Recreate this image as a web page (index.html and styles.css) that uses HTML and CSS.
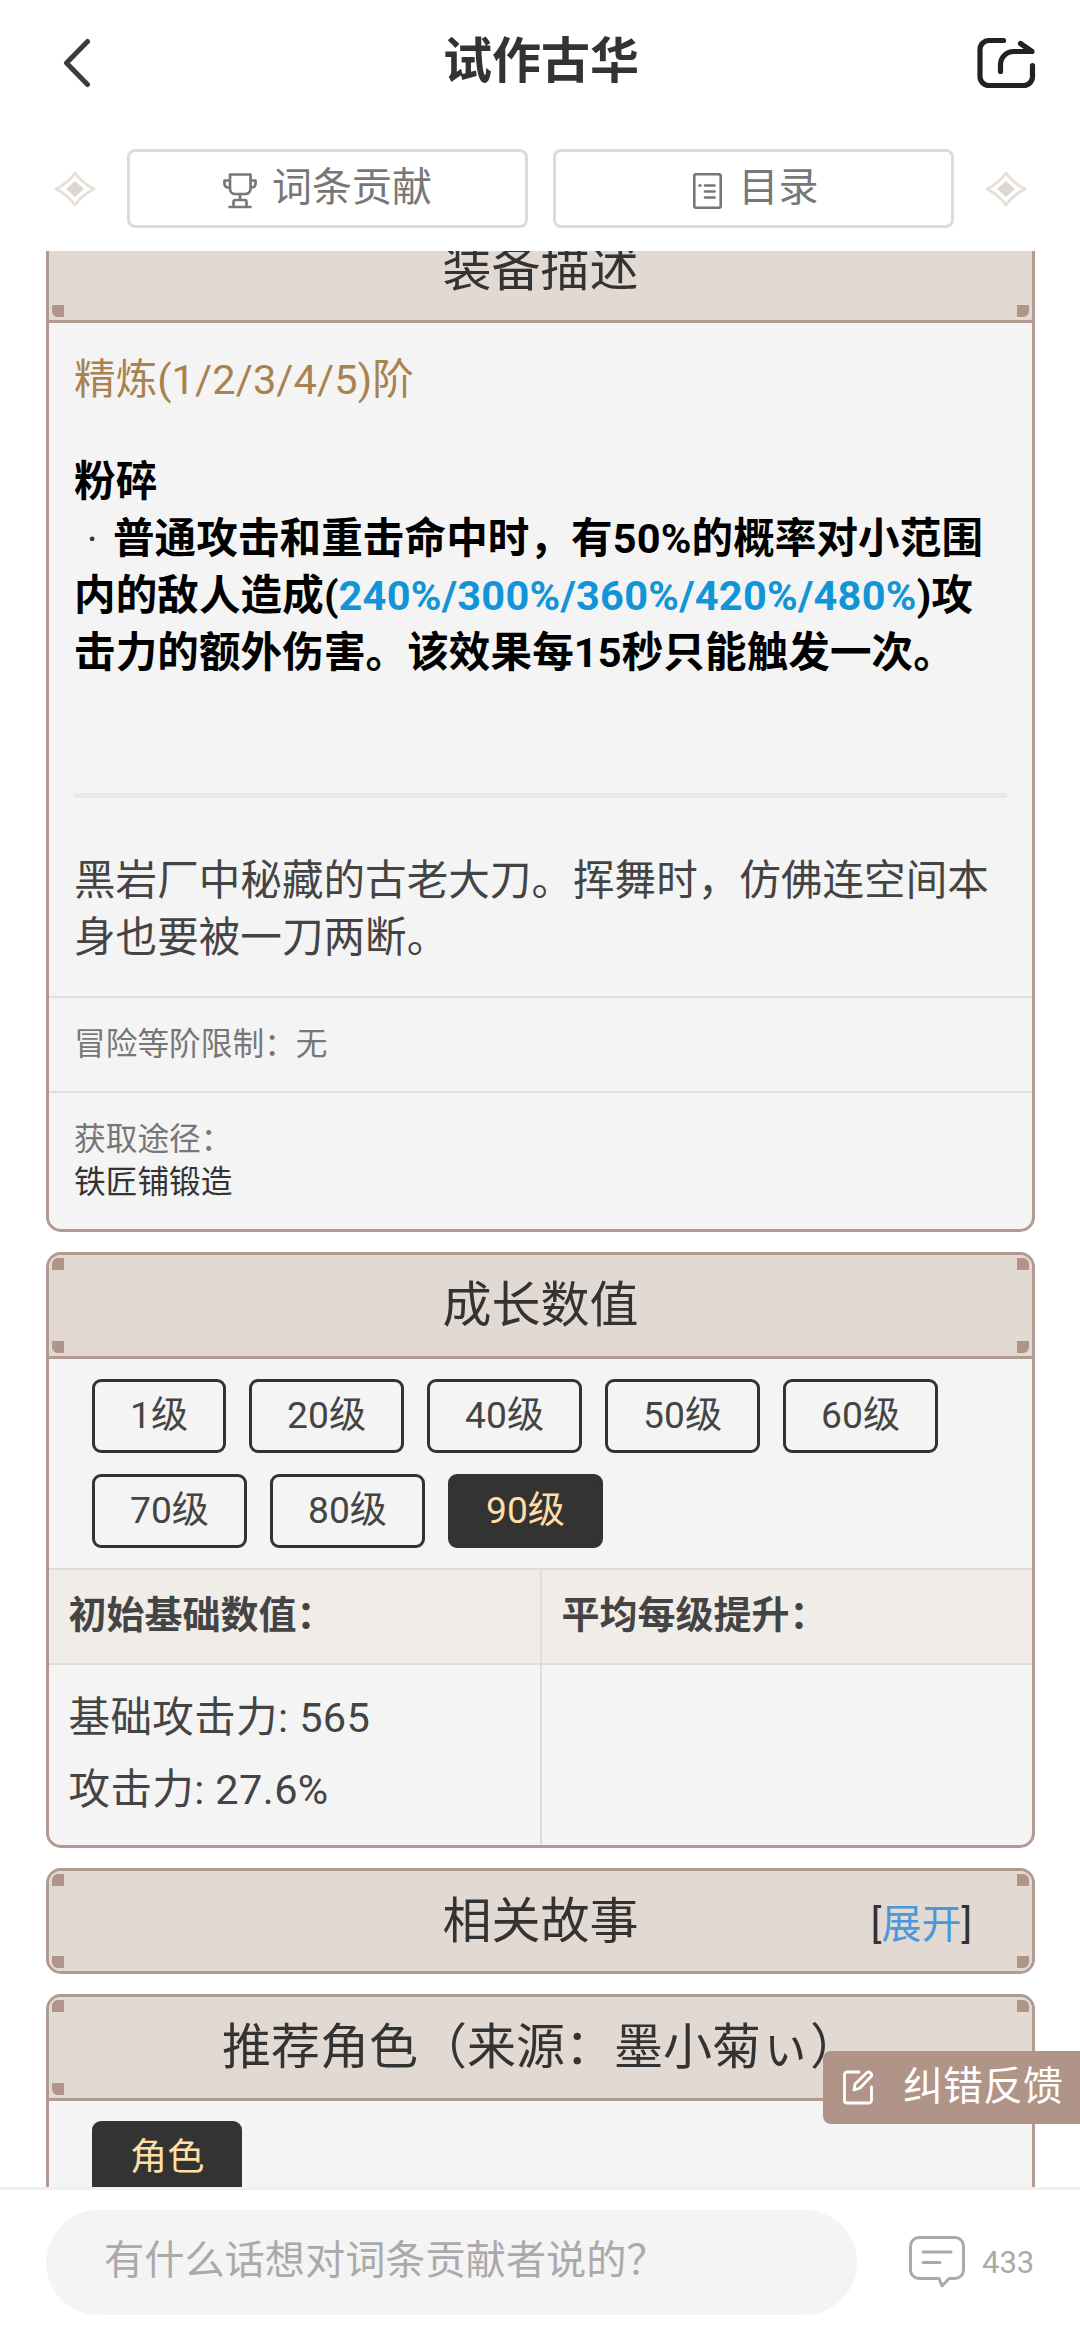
FILE: index.html
```html
<!DOCTYPE html>
<html lang="zh-CN">
<head>
<meta charset="utf-8">
<title>试作古华</title>
<link rel="stylesheet" href="styles.css">
</head>
<body>
<div class="app">
  <header class="topbar">
    <svg class="back" viewBox="0 0 28 50"><path d="M24.5 3.5 3.5 25l21 21.5"/></svg>
    <h1 class="page-title">试作古华</h1>
    <svg class="share" viewBox="0 0 60 54"><path d="M27.500 4.500H13A9 9 0 0 0 4 13.500v27a9 9 0 0 0 9 9h34.500a9 9 0 0 0 9-9V29.500M24.500 35.500V29c0-8 6-13.500 13.500-13.500h18L44.500 7.500"/></svg>
  </header>

  <nav class="actions">
    <svg class="diamond" viewBox="0 0 42 36"><path class="line" d="M21 2Q28 12 40 18 28 24 21 34 14 24 2 18 14 12 21 2Z"/><path class="fill" d="m21 10 9 8-9 8-9-8Z"/></svg>
    <a class="action">
      <svg class="trophy" viewBox="0 0 34 36"><path d="M7 1.500h20.500V16a5 5 0 0 1-5 5H12a5 5 0 0 1-5-5ZM7 7.500H1.500V11a3.500 3.500 0 0 0 3.500 3.500h2M27.500 7.500h5V11a3.500 3.500 0 0 1-3.500 3.500h-1.500M17 21v6M10.500 34v-5a2 2 0 0 1 2-2h9a2 2 0 0 1 2 2v5M6.500 34h21"/></svg>
      <span>词条贡献</span>
    </a>
    <a class="action action-toc">
      <svg class="toc" viewBox="0 0 29 36"><rect x="1.250" y="1.250" width="26.500" height="33.500" rx="2"/><path d="M6.500 12.500h1M12 12.500h9.500M12 18.500h9.500M12 24.500h9.500"/></svg>
      <span>目录</span>
    </a>
    <svg class="diamond" viewBox="0 0 42 36"><path class="line" d="M21 2Q28 12 40 18 28 24 21 34 14 24 2 18 14 12 21 2Z"/><path class="fill" d="m21 10 9 8-9 8-9-8Z"/></svg>
  </nav>

  <main class="content">
    <section class="card card-desc">
      <h2 class="card-head"><i class="bl"></i><i class="br"></i>装备描述</h2>
      <div class="desc">
        <p class="refine">精炼(1/2/3/4/5)阶</p>
        <div class="effect">
          <p>粉碎</p>
          <p><span class="dot">&nbsp;·&nbsp;</span>普通攻击和重击命中时，有50%的概率对小范围<br>内的敌人造成(<span class="values">240%/300%/360%/420%/480%</span>)攻<br>击力的额外伤害。该效果每15秒只能触发一次。</p>
        </div>
        <hr>
        <p class="lore">黑岩厂中秘藏的古老大刀。挥舞时，仿佛连空间本<br>身也要被一刀两断。</p>
      </div>
      <div class="meta">冒险等阶限制：无</div>
      <div class="meta source">获取途径：<br><span>铁匠铺锻造</span></div>
    </section>

    <section class="card">
      <h2 class="card-head"><i class="tl"></i><i class="tr"></i><i class="bl"></i><i class="br"></i>成长数值</h2>
      <div class="chips">
        <span class="chip">1级</span><span class="chip">20级</span><span class="chip">40级</span><span class="chip">50级</span><span class="chip">60级</span><span class="chip">70级</span><span class="chip">80级</span><span class="chip active">90级</span>
      </div>
      <div class="stats">
        <div class="stat-head">初始基础数值：</div>
        <div class="stat-head">平均每级提升：</div>
        <div class="stat-body"><p>基础攻击力: 565</p><p>攻击力: 27.6%</p></div>
        <div class="stat-body"></div>
      </div>
    </section>

    <section class="card">
      <h2 class="card-head closed"><i class="tl"></i><i class="tr"></i><i class="bl"></i><i class="br"></i>相关故事<span class="toggle">[<a>展开</a>]</span></h2>
    </section>

    <section class="card">
      <h2 class="card-head"><i class="tl"></i><i class="tr"></i><i class="bl"></i><i class="br"></i>推荐角色（来源：墨小菊ぃ）</h2>
      <div class="chips"><span class="chip active role">角色</span></div>
    </section>
  </main>

  <a class="feedback">
    <svg viewBox="0 0 30 35"><path d="M16 2H4a2.500 2.500 0 0 0-2.500 2.500v26A2.500 2.500 0 0 0 4 33h22a2.500 2.500 0 0 0 2.500-2.500V17"/><path class="pen" d="m11 20 1-6L24 2.500a2 2 0 0 1 3 0l1 1a2 2 0 0 1 0 3L17 18Z"/></svg>
    <span>纠错反馈</span>
  </a>

  <footer class="bottombar">
    <div class="input">有什么话想对词条贡献者说的？</div>
    <svg class="comment" viewBox="0 0 56 52"><path d="M10 1.500h36a8.500 8.500 0 0 1 8.500 8.500v24a8.500 8.500 0 0 1-8.500 8.500h-6L33 50l-3-7.500H10A8.500 8.500 0 0 1 1.500 34V10A8.500 8.500 0 0 1 10 1.500ZM14 16h28M14 26.500h17"/></svg>
    <span class="count">433</span>
  </footer>
</div>
</body>
</html>
```
FILE: styles.css
```css
* { box-sizing: border-box; }

body {
  margin: 0;
  background: #fff;
  color: #333;
  font-family: Roboto, "Noto Sans CJK SC", sans-serif;
}

h1, h2, p { margin: 0; font-weight: inherit; }

svg { display: block; flex: none; fill: none; stroke-linecap: round; stroke-linejoin: round; }

.app {
  position: relative;
  display: flex;
  flex-direction: column;
  width: 1080px;
  height: 2330px;
  overflow: hidden;
}

.topbar {
  display: flex;
  align-items: center;
  justify-content: space-between;
  height: 125px;
  padding: 0 44px 0 63px;
}
.back { width: 28px; height: 50px; stroke: #3c3c3c; stroke-width: 5; }
.page-title { margin: 0 0 2px 15px; font-size: 49px; line-height: 72px; font-weight: 700; }
.share { width: 60px; height: 54px; stroke: #222; stroke-width: 5.200; }

.actions {
  display: flex;
  align-items: center;
  height: 126px;
  padding: 1px 53px 0 54px;
}
.diamond { width: 42px; height: 36px; }
.diamond .line { stroke: #e5e1da; stroke-width: 3; }
.diamond .fill { fill: #ded6cf; }
.action {
  display: flex;
  align-items: center;
  justify-content: center;
  width: 401px;
  height: 79px;
  margin-left: 31px;
  border: 3px solid #dfdcd6;
  border-radius: 8px;
  color: #777;
  font-size: 40px;
  line-height: 60px;
}
.action span { margin-top: -1px; }
.action-toc { margin: 0 31px 0 25px; }
.trophy { width: 34px; height: 36px; margin: 4px 15px 0 0; stroke: #777; stroke-width: 2.700; }
.toc { width: 29px; height: 36px; margin: 4px 17px 0 4px; stroke: #777; stroke-width: 2.700; }

.content {
  display: flex;
  flex-direction: column;
  gap: 20px;
  height: 1936px;
  padding: 0 45px 0 46px;
  overflow: hidden;
}
.card {
  flex: none;
  border: 3px solid #b09a92;
  border-radius: 15px;
  background: #f4f4f4;
  overflow: hidden;
}
.card-desc { margin-top: -35px; }
.card-head {
  position: relative;
  height: 104px;
  border-bottom: 3px solid #b09a92;
  background: #e1d9d2;
  font-size: 49px;
  line-height: 101px;
  font-weight: 400;
  text-align: center;
}
.card-head.closed { height: 100px; border-bottom: 0; }
.card-head i { position: absolute; width: 12px; height: 12px; background: #b09488; }
.card-head .tl { left: 3px; top: 3px; border-top-left-radius: 6px; }
.card-head .tr { right: 3px; top: 3px; border-top-right-radius: 6px; }
.card-head .bl { left: 3px; bottom: 3px; border-bottom-left-radius: 6px; }
.card-head .br { right: 3px; bottom: 3px; border-bottom-right-radius: 6px; }
.toggle { position: absolute; right: 60px; top: 3px; font-size: 40px; }
.toggle a { color: #4a97dd; }

.desc {
  height: 673px;
  padding: 28px 25px 0;
  color: #444;
  font-size: 41.540px;
  line-height: 57px;
}
.refine { margin-bottom: 45px; color: #a9834f; letter-spacing: 0.100px; }
.effect { color: #000; font-weight: 700; letter-spacing: 0.120px; }
.dot { color: #333; font-weight: 400; letter-spacing: 2.500px; }
.values { color: #1195d8; letter-spacing: 0.230px; }
.desc hr { height: 5px; margin: 112px 0 54px; border: 0; background: #e8e8e8; }
.lore { letter-spacing: 0.050px; }

.meta {
  height: 95px;
  padding: 25px 25px 0;
  border-top: 2px solid #dedede;
  color: #777;
  font-size: 31.700px;
  line-height: 43px;
}
.meta.source { height: 138px; }
.source span { color: #333; }

.chips {
  display: flex;
  flex-wrap: wrap;
  gap: 21px 23px;
  padding: 20px 43px;
}
.chip {
  display: flex;
  align-items: center;
  height: 74px;
  padding: 0 35px 8px;
  border: 3px solid #333;
  border-radius: 9px;
  color: #444;
  font-size: 37.200px;
}
.chip.active { background: #333; color: #ffdfa5; }

.stats { display: grid; grid-template-columns: 491px 1fr; grid-template-rows: 95px 182px; }
.stats > div { border-top: 2px solid #e0ddd8; }
.stats > div:nth-child(even) { border-left: 2px solid #e0ddd8; }
.stat-head {
  padding: 0 19.500px;
  background: #f0ede8;
  color: #444;
  font-size: 38px;
  line-height: 90px;
  font-weight: 700;
}
.stat-body { padding: 17px 19.500px; color: #444; font-size: 41.500px; line-height: 71.500px; letter-spacing: 0.400px; }

.feedback {
  position: absolute;
  right: 0;
  top: 2051px;
  display: flex;
  align-items: center;
  width: 257px;
  height: 73px;
  padding-left: 20px;
  border-radius: 8px 0 0 8px;
  background: #b09488;
  color: #fff;
  font-size: 40px;
  line-height: 60px;
}
.feedback svg { width: 30px; height: 35px; margin-right: 30px; stroke: #fff; stroke-width: 2.800; }
.feedback span { margin-top: -1px; }

.bottombar {
  display: flex;
  align-items: center;
  height: 143px;
  padding: 5px 0 0 46px;
  border-top: 3px solid #f0f0f0;
  background: #fff;
  color: #aaa;
}
.input {
  width: 811px;
  height: 105px;
  padding-left: 58px;
  border-radius: 53px;
  background: #f4f4f4;
  font-size: 40.200px;
  line-height: 101px;
}
.comment { width: 56px; height: 52px; margin: -1px 17px 0 52px; stroke: #aaa; stroke-width: 3; }
.count { font-size: 31px; }
```
